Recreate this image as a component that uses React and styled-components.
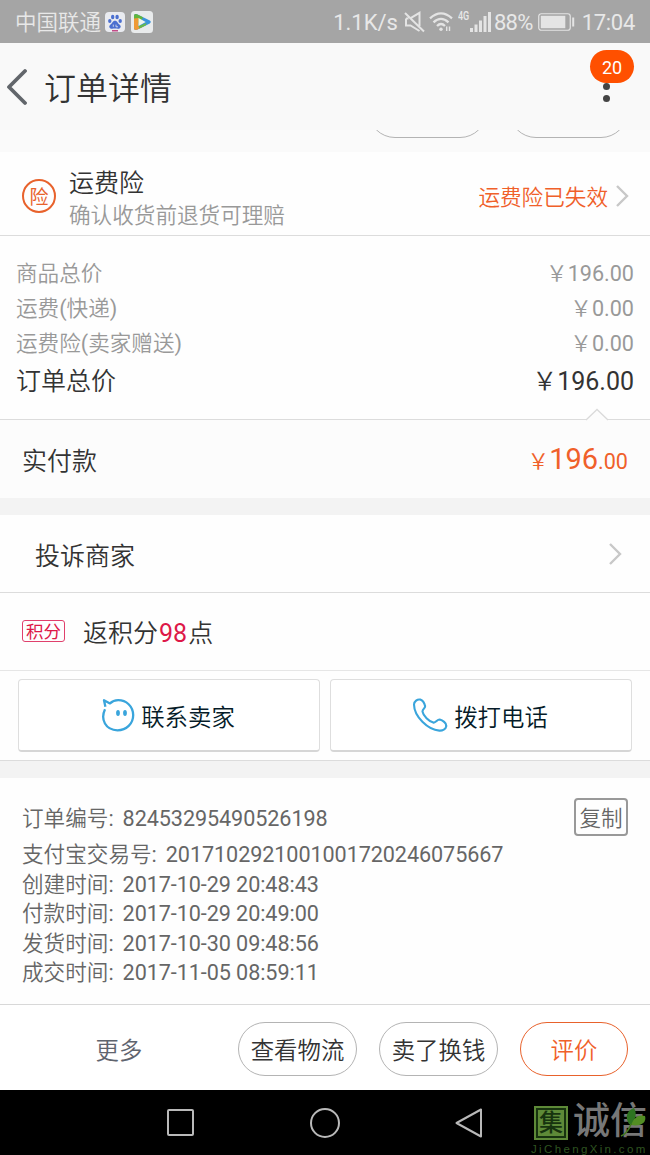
import styled, { createGlobalStyle } from "styled-components";

const prices = [
  { label: "商品总价", value: "￥196.00" },
  { label: "运费(快递)", value: "￥0.00" },
  { label: "运费险(卖家赠送)", value: "￥0.00" },
];

const details = [
  { label: "支付宝交易号:", value: "2017102921001001720246075667" },
  { label: "创建时间:", value: "2017-10-29 20:48:43" },
  { label: "付款时间:", value: "2017-10-29 20:49:00" },
  { label: "发货时间:", value: "2017-10-30 09:48:56" },
  { label: "成交时间:", value: "2017-11-05 08:59:11" },
];

const Chevron = () => (
  <svg width="14" height="24" viewBox="0 0 14 24" fill="none">
    <path d="M2 2 L12 12 L2 22" stroke="#c8c8c8" strokeWidth="2.4" />
  </svg>
);

const StatusBar = () => (
  <Status>
    <Carrier>中国联通</Carrier>
    <svg width="20" height="20" viewBox="0 0 20 20">
      <rect width="20" height="20" rx="4" fill="#e9ebf0" />
      <g fill="#4a6fd0">
        <ellipse cx="4.8" cy="9" rx="1.7" ry="2.1" />
        <ellipse cx="7.7" cy="5" rx="1.7" ry="2.2" />
        <ellipse cx="12.1" cy="5" rx="1.7" ry="2.2" />
        <ellipse cx="15.2" cy="9" rx="1.7" ry="2.1" />
        <path d="M10 8.7 C12.4 8.7 12.6 11.2 14.5 12.5 C17 14.4 15.3 17.2 12.8 16.7 C11 16.4 9 16.4 7.2 16.7 C4.7 17.2 3 14.4 5.5 12.5 C7.4 11.2 7.6 8.7 10 8.7Z" />
      </g>
      <path d="M8.3 12.6 V14.8 M11 12.6 V14.8 H13" stroke="#e9ebf0" strokeWidth="0.8" fill="none" />
      <rect x="7" y="18" width="6" height="1.5" fill="#c24c86" />
    </svg>
    <PlayIcon width="22" height="22" viewBox="0 0 22 22">
      <rect width="22" height="22" rx="3.5" fill="#e9ebec" />
      <path d="M3 5 Q3 2 6 3.3 L18.8 9.6 Q20.8 11 18.8 12.4 L6 18.7 Q3 20 3 17Z" fill="#3b94dc" />
      <path d="M3 5 Q3 2 6 3.3 L12 6.3 L9 12 L3 12Z" fill="#62b53d" />
      <path d="M3 7.5 L7.5 7 V15 L13 15.2 L6 18.7 Q3 20 3 17Z" fill="#ef9a35" />
      <path d="M7.5 15 L15.5 12 L15 14.2 L8.5 17.4Z" fill="#67b94b" />
      <path d="M7.5 7 L14.7 11 L7.5 15Z" fill="#f1f4ec" />
    </PlayIcon>
    <Speed>1.1K/s</Speed>
    <svg width="21" height="22" viewBox="0 0 21 22" fill="none" stroke="#e4e4e4" strokeWidth="2">
      <path d="M2 7.5 V14.5 H6.5 L15.5 20 M7 6.8 L15.5 1.8 V15 M2 7.5 H4.5 M1 2 L20 20.5" />
    </svg>
    <WifiIcon width="24" height="20" viewBox="0 0 24 20" fill="none" stroke="#e4e4e4" strokeWidth="2.3">
      <path d="M1 6.3 Q12 -3.5 23 6.3" />
      <path d="M4.5 10.3 Q12 3.5 19.5 10.3" />
      <path d="M8 14 Q12 10 16 14" />
      <circle cx="12" cy="17.2" r="1.7" fill="#e4e4e4" stroke="none" />
      <path d="M17.7 14.5 V19 M20.5 14.5 V19" strokeWidth="1.4" />
    </WifiIcon>
    <Network>4G</Network>
    <svg width="21" height="20" viewBox="0 0 21 20" fill="#e4e4e4">
      <rect x="0" y="16" width="3" height="4" />
      <rect x="4.5" y="12.5" width="3" height="7.5" />
      <rect x="9" y="8.5" width="3" height="11.5" />
      <rect x="13.5" y="4" width="3" height="16" />
      <rect x="18" y="0" width="3" height="20" />
    </svg>
    <Percent>88%</Percent>
    <svg width="37" height="18" viewBox="0 0 37 18">
      <rect x="0.75" y="0.75" width="31.5" height="16.5" rx="2.5" fill="none" stroke="#e4e4e4" strokeWidth="1.2" />
      <rect x="2.8" y="2.8" width="24.5" height="12.4" fill="#e4e4e4" />
      <rect x="34.2" y="4.5" width="2" height="9" fill="#e4e4e4" />
    </svg>
    <Clock>17:04</Clock>
  </Status>
);

const App = () => {
  return (
    <Screen>
      <GlobalStyle />
      <StatusBar />

      <Header>
        <svg width="22" height="38" viewBox="0 0 22 38" fill="none">
          <path d="M20 3 L4 19 L20 35" stroke="#62666b" strokeWidth="3.8" strokeLinecap="round" strokeLinejoin="round" />
        </svg>
        <Title>订单详情</Title>
        <MenuButton>
          <Badge>20</Badge>
          <Dot />
          <Dot />
        </MenuButton>
      </Header>

      <ScrolledActions>
        <Pill />
        <Pill />
      </ScrolledActions>

      <Insurance>
        <InsuranceMark>险</InsuranceMark>
        <InsuranceText>
          <InsuranceTitle>运费险</InsuranceTitle>
          <InsuranceNote>确认收货前退货可理赔</InsuranceNote>
        </InsuranceText>
        <InsuranceState>
          <span>运费险已失效</span>
          <Chevron />
        </InsuranceState>
      </Insurance>

      <Prices>
        {prices.map((p) => (
          <PriceRow key={p.label}>
            <span>{p.label}</span>
            <span>{p.value}</span>
          </PriceRow>
        ))}
        <TotalRow>
          <span>订单总价</span>
          <span>￥196.00</span>
        </TotalRow>
      </Prices>

      <Paid>
        <Notch width="24" height="13" viewBox="0 0 24 13">
          <path d="M1 12 L12 1.5 L23 12 V13 H1Z" fill="#fcfcfc" />
          <path d="M1 12 L12 1.5 L23 12" fill="none" stroke="#dadada" strokeWidth="1.3" />
        </Notch>
        <span>实付款</span>
        <PaidAmount>
          ￥<PaidBig>196</PaidBig>.00
        </PaidAmount>
      </Paid>

      <Divider />

      <Complaint>
        <span>投诉商家</span>
        <Chevron />
      </Complaint>

      <Points>
        <PointsTag>积分</PointsTag>
        <span>
          返积分<PointsCount>98</PointsCount>点
        </span>
      </Points>

      <Contacts>
        <ContactButton>
          <svg width="34" height="34" viewBox="0 0 34 34" fill="none">
            <path
              d="M4 11.2 C-.8 21.5 4.5 32 16.5 32.3 C25.5 32.3 32.2 25.7 32.2 17 C32 8 25.2 2.2 17.2 2.2 C14 2.2 11.4 3 9 5.4 L3 2.3 L4.4 8.8"
              stroke="#3aa5dc"
              strokeWidth="2.3"
              strokeLinejoin="round"
            />
            <ellipse cx="17" cy="15" rx="1.9" ry="2.9" fill="#3aa5dc" />
            <ellipse cx="24" cy="15" rx="1.9" ry="2.9" fill="#3aa5dc" />
          </svg>
          <span>联系卖家</span>
        </ContactButton>
        <ContactButton>
          <svg width="36" height="34" viewBox="0 0 36 34" fill="none">
            <path
              d="M2 6.5 C2 3.6 5.5 .8 8.2 1.6 C10.8 2.6 12.5 5.5 13.1 8 C13.5 10.2 10.3 11 10.5 13.6 C11.3 18 16.8 23.2 21.3 24.6 C24 25.2 25 21.3 27.7 21.5 C30.4 22.2 34.6 25 34.3 28 C33.8 31.2 30.5 32.8 27.3 32.6 C15.8 31.8 2.2 18.6 2 6.5Z"
              stroke="#3aa5dc"
              strokeWidth="2.1"
              strokeLinejoin="round"
            />
          </svg>
          <span>拨打电话</span>
        </ContactButton>
      </Contacts>

      <Divider />

      <Details>
        <OrderRow>
          <DetailRow>
            <span>订单编号:</span>
            <DetailValue>82453295490526198</DetailValue>
          </DetailRow>
          <CopyButton>复制</CopyButton>
        </OrderRow>
        {details.map((d) => (
          <DetailRow key={d.label}>
            <span>{d.label}</span>
            <DetailValue>{d.value}</DetailValue>
          </DetailRow>
        ))}
      </Details>

      <Footer>
        <More>更多</More>
        <Pill>查看物流</Pill>
        <Pill>卖了换钱</Pill>
        <Pill $primary>评价</Pill>
      </Footer>

      <NavBar>
        <svg width="30" height="30" viewBox="0 0 30 30" fill="none" stroke="#b9b9b9" strokeWidth="2">
          <rect x="2" y="2" width="25" height="25" rx="1" />
        </svg>
        <svg width="30" height="30" viewBox="0 0 30 30" fill="none" stroke="#b9b9b9" strokeWidth="2">
          <circle cx="15" cy="15" r="14" />
        </svg>
        <svg width="30" height="30" viewBox="0 0 30 30" fill="none" stroke="#b9b9b9" strokeWidth="2" strokeLinejoin="round">
          <path d="M27 1.5 V28.5 L2.5 15Z" />
        </svg>
        <Watermark>
          <WatermarkTop>
            <Seal>
              <SealInner>集</SealInner>
            </Seal>
            <WatermarkName>诚信</WatermarkName>
            <Leaf width="28" height="31" viewBox="0 0 28 31">
              <path d="M10 17 C5 9 9 3 15 1 C18 6 17 12 12 18Z" fill="#2d7420" />
              <path d="M12 18 C15 10 20 7 26 9 C28 15 22 20 12 18Z" fill="#528d23" />
              <path d="M12 17 Q9 26 2 29" stroke="#457a20" strokeWidth="1.5" fill="none" />
            </Leaf>
          </WatermarkTop>
          <Site>JiChengXin.com</Site>
        </Watermark>
      </NavBar>
    </Screen>
  );
};

//Styled Components
const GlobalStyle = createGlobalStyle`
  * {
    box-sizing: border-box;
  }

  body {
    margin: 0;
    font-family: Roboto, "Noto Sans CJK SC DemiLight", "Noto Sans CJK SC", sans-serif;
    font-weight: 400;
  }

  svg {
    display: block;
    flex: none;
  }
`;

const Screen = styled.div`
  display: flex;
  flex-direction: column;
  width: 650px;
  height: 1155px;
  overflow: hidden;
  background-color: #fefefe;
  color: #333;
  white-space: nowrap;
`;

const Status = styled.div`
  display: flex;
  align-items: center;
  height: 43px;
  padding: 1px 15px 0 15px;
  background-color: #a5a5a5;
  color: #e8e8e8;
  font-size: 22px;
  line-height: 30px;
`;

const Carrier = styled.span`
  width: 90px;
  padding-top: 2px;
  font-size: 21.5px;
`;

const PlayIcon = styled.svg`
  margin-left: 6px;
`;

const Speed = styled.span`
  margin-left: auto;
  margin-right: 6px;
  padding-top: 2px;
`;

const WifiIcon = styled.svg`
  margin-left: 4px;
`;

const Network = styled.span`
  align-self: flex-start;
  margin: 7px 0 0 5px;
  width: 12px;
  font-size: 12px;
  font-weight: 500;
  line-height: 16px;
  transform: scaleX(0.75);
  transform-origin: left;
`;

const Percent = styled.span`
  margin: 0 5px 0 3px;
  padding-top: 2px;
  letter-spacing: -0.7px;
`;

const Clock = styled.span`
  margin-left: 7px;
  padding-top: 2px;
  letter-spacing: -0.3px;
`;

const Header = styled.header`
  display: flex;
  align-items: center;
  height: 87px;
  padding: 1px 16px 0 5px;
  background-color: #f9f9f9;
`;

const Title = styled.h1`
  flex: 1;
  margin: 4px 0 0 17px;
  font-size: 32px;
  font-weight: 400;
  line-height: 40px;
`;

const MenuButton = styled.div`
  display: flex;
  flex-direction: column;
  align-items: center;
  align-self: flex-start;
  width: 44px;
  padding-top: 6px;
`;

const Badge = styled.span`
  width: 44px;
  height: 33px;
  border-radius: 17px;
  background-color: #ff5000;
  color: #fff;
  font-size: 18px;
  line-height: 35px;
  text-align: center;
`;

const Dot = styled.span`
  width: 7px;
  height: 7px;
  margin: 0 11px 5px 0;
  border-radius: 50%;
  background-color: #444;
`;

const ScrolledActions = styled.div`
  display: flex;
  align-items: flex-end;
  justify-content: flex-end;
  gap: 22px;
  height: 22px;
  padding: 0 22px 14px 0;
  overflow: hidden;
  background-color: #fafafa;
`;

const Pill = styled.button`
  flex: none;
  width: ${(props) => (props.$primary ? 108 : 119)}px;
  height: 54px;
  padding: 4px 0 0;
  border: 1px solid ${(props) => (props.$primary ? "#e8622c" : "#b4b4b4")};
  border-radius: 27px;
  background-color: transparent;
  color: ${(props) => (props.$primary ? "#f0602a" : "#333")};
  font-family: inherit;
  font-size: 23.4px;
  line-height: 48px;
`;

const Insurance = styled.section`
  display: flex;
  align-items: center;
  height: 84px;
  padding: 0 21px 0 22px;
  border-bottom: 1px solid #dcdcdc;
`;

const InsuranceMark = styled.span`
  width: 34px;
  height: 34px;
  margin-top: 4px;
  border: 2px solid #e8622c;
  border-radius: 50%;
  color: #e8622c;
  font-family: "Noto Sans CJK SC", sans-serif;
  font-size: 19px;
  font-weight: 400;
  line-height: 29px;
  text-align: center;
`;

const InsuranceText = styled.div`
  display: flex;
  flex: 1;
  flex-direction: column;
  margin: 12px 0 0 13px;
`;

const InsuranceTitle = styled.span`
  font-size: 25px;
  line-height: 32px;
`;

const InsuranceNote = styled.span`
  color: #999;
  font-size: 21.6px;
  line-height: 31px;
`;

const InsuranceState = styled.div`
  display: flex;
  align-items: center;
  gap: 7px;
  color: #f0602a;
  font-size: 21.6px;
  line-height: 30px;

  span {
    padding-top: 9px;
  }

  svg {
    margin-top: 4px;
  }
`;

const Prices = styled.section`
  height: 183px;
  padding: 20px 16px 0;
`;

const PriceRow = styled.div`
  display: flex;
  justify-content: space-between;
  color: #999;
  font-size: 21.6px;
  line-height: 35px;
`;

const TotalRow = styled(PriceRow)`
  color: #333;
  font-size: 25px;
  line-height: 42px;
`;

const Paid = styled.section`
  position: relative;
  display: flex;
  align-items: center;
  justify-content: space-between;
  height: 79px;
  padding: 0 22px 1px;
  border-top: 1px solid #dcdcdc;
  background-color: #fcfcfc;
  font-size: 25px;
`;

const Notch = styled.svg`
  position: absolute;
  top: -12px;
  left: 585px;
`;

const PaidAmount = styled.span`
  color: #f0602a;
  font-size: 21.6px;
`;

const PaidBig = styled.span`
  font-size: 29px;
`;

const Divider = styled.div`
  flex: none;
  height: 17px;
  background-color: #f3f3f3;
`;

const Complaint = styled.section`
  display: flex;
  align-items: center;
  justify-content: space-between;
  height: 78px;
  padding: 0 28px 0 35px;
  border-bottom: 1px solid #dcdcdc;
  font-size: 25px;
`;

const Points = styled.section`
  display: flex;
  align-items: center;
  gap: 18px;
  height: 78px;
  padding: 0 22px 1px;
  border-bottom: 1px solid #e6e6e6;
  font-size: 25px;
`;

const PointsTag = styled.span`
  width: 43px;
  height: 22px;
  margin-top: -1px;
  border: 1px solid #e0406c;
  border-radius: 3px;
  color: #dd1848;
  font-family: "Noto Sans CJK SC", sans-serif;
  font-size: 17.5px;
  line-height: 19px;
  text-align: center;
`;

const PointsCount = styled.span`
  margin: 0 1px;
  color: #dd1848;
`;

const Contacts = styled.section`
  display: flex;
  gap: 10px;
  height: 90px;
  padding: 8px 18px;
  border-bottom: 1px solid #dcdcdc;
`;

const ContactButton = styled.button`
  display: flex;
  flex: 1;
  align-items: center;
  justify-content: center;
  gap: 6px;
  height: 73px;
  padding: 1px 2px 0 0;
  border: 1px solid #dedede;
  border-bottom: 2px solid #d6d6d6;
  border-radius: 4px;
  background-color: #fff;
  color: #051b28;
  font-family: inherit;
  font-size: 23.4px;

  svg {
    margin-top: -2px;
  }
`;

const Details = styled.section`
  height: 226px;
  padding: 19px 22px 0;
  color: #666;
  font-size: 21.6px;
`;

const OrderRow = styled.div`
  display: flex;
  align-items: center;
  justify-content: space-between;
  height: 43px;
`;

const DetailRow = styled.div`
  display: flex;
  gap: 9px;
  line-height: 29.6px;
`;

const DetailValue = styled.span`
  letter-spacing: -0.08px;
`;

const CopyButton = styled.button`
  width: 54px;
  height: 38px;
  margin-top: -3px;
  padding: 3px 0 0;
  border: 2px solid #999;
  border-radius: 4px;
  background-color: transparent;
  color: #666;
  font-family: inherit;
  font-size: 21.6px;
  line-height: 31px;
`;

const Footer = styled.footer`
  display: flex;
  align-items: center;
  gap: 22px;
  height: 86px;
  padding: 2px 22px 0 0;
  border-top: 1px solid #d8d8d8;
  background-color: #fff;
`;

const More = styled.span`
  flex: 1;
  padding: 1px 0 0 22px;
  color: #5f646e;
  font-size: 23.4px;
  text-align: center;
`;

const NavBar = styled.nav`
  position: relative;
  display: flex;
  align-items: center;
  gap: 114px;
  flex: 1;
  padding-left: 166px;
  background-color: #000;
`;

const Watermark = styled.div`
  position: absolute;
  top: 16px;
  left: 531px;
  width: 119px;
  font-family: Roboto, "Noto Sans CJK SC", sans-serif;
`;

const WatermarkTop = styled.div`
  display: flex;
  height: 36px;
  padding-left: 3px;
`;

const Seal = styled.span`
  width: 34px;
  height: 34px;
  padding: 2px;
  background-color: #5e8a38;
`;

const SealInner = styled.span`
  display: block;
  height: 30px;
  border: 2px solid #17330f;
  color: #17330f;
  font-size: 24px;
  font-weight: 500;
  line-height: 26px;
  text-align: center;
`;

const WatermarkName = styled.span`
  margin-left: 5px;
  color: #777;
  font-size: 37px;
  font-weight: 500;
  line-height: 32px;
`;

const Leaf = styled.svg`
  position: absolute;
  top: 1px;
  right: 3px;
`;

const Site = styled.div`
  margin-top: 1px;
  color: #2f5420;
  font-family: "Liberation Sans", sans-serif;
  font-size: 11.5px;
  letter-spacing: 2.35px;
  line-height: 13px;
`;

export default App;
